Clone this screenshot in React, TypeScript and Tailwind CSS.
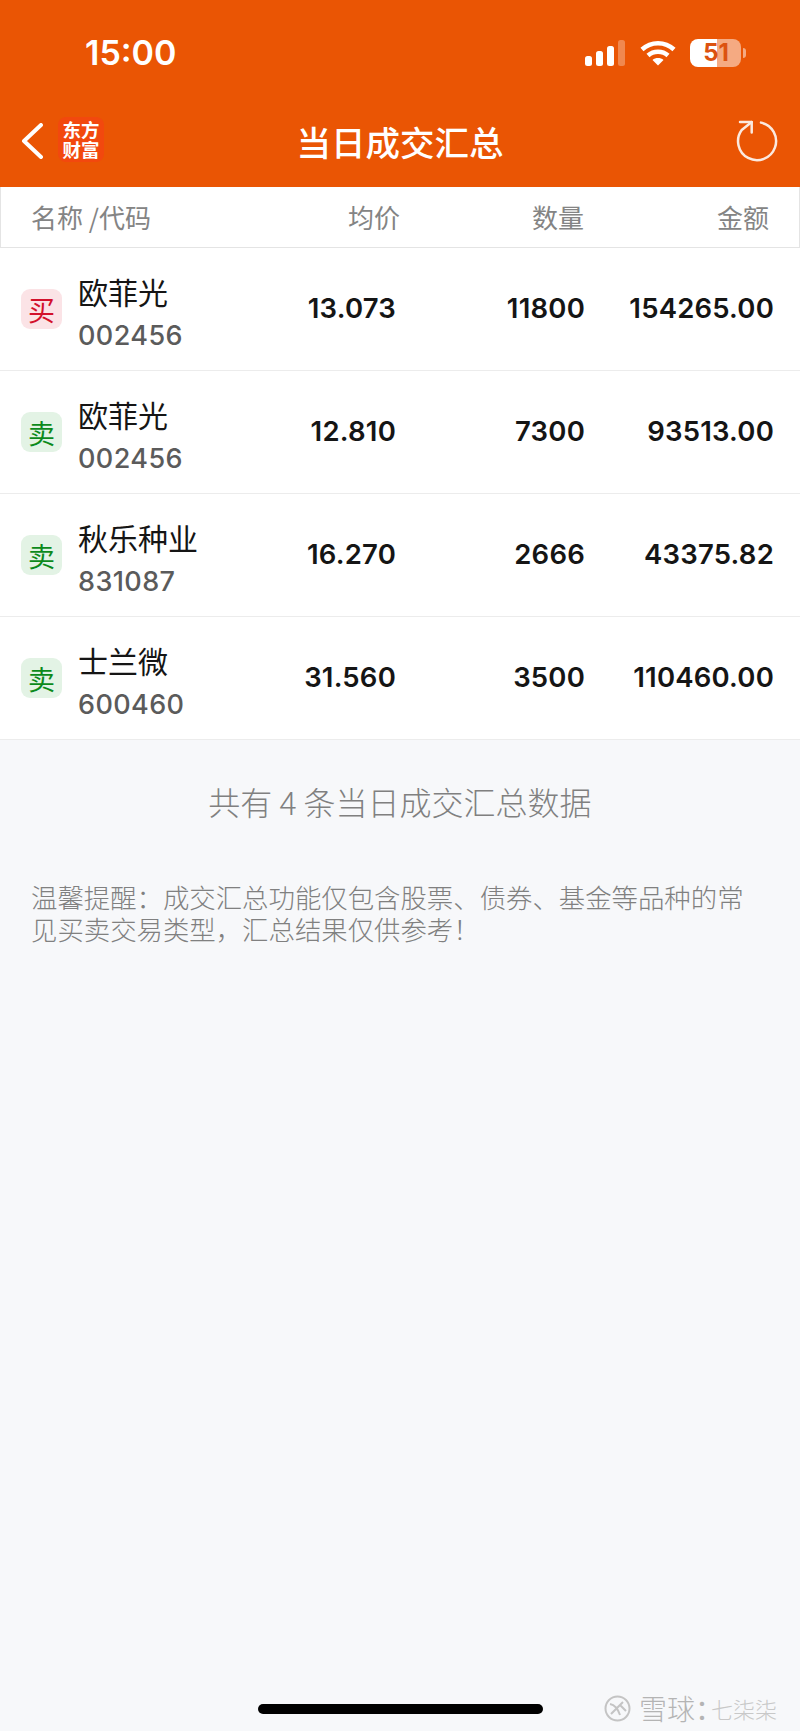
const cjk = "font-['Noto_Sans_CJK_SC','Noto_Sans',sans-serif]";

const rows = [
  { side: "买", name: "欧菲光", code: "002456", price: "13.073", qty: "11800", amount: "154265.00" },
  { side: "卖", name: "欧菲光", code: "002456", price: "12.810", qty: "7300", amount: "93513.00" },
  { side: "卖", name: "秋乐种业", code: "831087", price: "16.270", qty: "2666", amount: "43375.82" },
  { side: "卖", name: "士兰微", code: "600460", price: "31.560", qty: "3500", amount: "110460.00" },
];

const StatusIcons = () => (
  <div className="flex items-center gap-[14px]">
    <svg width="41" height="27" viewBox="0 0 41 27" fill="#fff">
      <rect x="0" y="16" width="7" height="10" rx="2.5" />
      <rect x="11" y="11" width="7" height="15" rx="2.5" />
      <rect x="22" y="6" width="7" height="20" rx="2.5" />
      <rect x="33" y="0" width="7" height="26" rx="2.5" fillOpacity="0.3" />
    </svg>
    <svg width="36" height="27" viewBox="0 0 36 27" fill="none" stroke="#fff" strokeWidth="4.5">
      <path d="M2 9.5C11 1 25 1 34 9.5" />
      <path d="M8 15.5C13.5 10.5 22.5 10.5 28 15.5" />
      <path d="M18 25.5l-5.5-5.5c3-2.600 8-2.600 11 0z" fill="#fff" stroke="none" />
    </svg>
    <div className="relative flex h-[28px] w-[56px] items-center">
      <div className="flex h-[28px] w-[52px] overflow-hidden rounded-[8px]">
        <div className="w-[27px] bg-white"></div>
        <div className="w-[25px] bg-white/50"></div>
      </div>
      <div className="ml-[2px] h-[10px] w-[3px] rounded-r-full bg-white/50"></div>
      <span className="absolute left-0 top-0 flex h-[28px] w-[52px] items-center justify-center font-['Inter'] text-[24px] font-bold leading-none text-[#dc5210]">
        51
      </span>
    </div>
  </div>
);

const Logo = () => (
  <div className={`flex h-[45px] w-[46px] flex-col items-center justify-center rounded-[8px] bg-[#f2480e] text-[18.500px] font-bold leading-[20px] text-white ${cjk}`}>
    <span>东方</span>
    <span>财富</span>
  </div>
);

const Row = ({ row }: { row: (typeof rows)[number] }) => {
  const buy = row.side === "买";
  return (
    <div className="flex h-[123px] items-center border-b border-[#ececec] bg-white pl-[21px]">
      <div
        className={`flex h-[40px] w-[41px] items-center justify-center rounded-[9px] text-[27px] leading-none ${cjk} ${
          buy ? "bg-[#fbe3e6] text-[#d3112c]" : "bg-[#e3f3e5] text-[#0c8a1b]"
        }`}
      >
        {row.side}
      </div>
      <div className="ml-[16px] w-[201px] pt-[6px]">
        <div className={`text-[30px] leading-[40px] text-[#151515] ${cjk}`}>{row.name}</div>
        <div className="mt-[7px] font-['Inter'] text-[27px] font-medium leading-[36px] tracking-[0.4px] text-[#5b5b5b]">{row.code}</div>
      </div>
      <div className="w-[117px] pb-[1px] text-right font-['Inter'] text-[27.500px] font-semibold tracking-[0.2px] text-[#151515]">{row.price}</div>
      <div className="w-[189px] pb-[1px] text-right font-['Inter'] text-[27.500px] font-semibold tracking-[0.2px] text-[#151515]">{row.qty}</div>
      <div className="w-[189px] pb-[1px] text-right font-['Inter'] text-[27.500px] font-semibold tracking-[0.2px] text-[#151515]">{row.amount}</div>
    </div>
  );
};

export default function App() {
  return (
    <div className="relative flex h-[1731px] w-[800px] flex-col overflow-hidden bg-[#f7f8fa]">
      <header className="h-[187px] shrink-0 bg-[#ea5504] text-white">
        <div className="flex h-[106px] items-center justify-between pl-[85px] pr-[54px]">
          <span className="font-['Inter'] text-[34px] font-semibold leading-none">15:00</span>
          <StatusIcons />
        </div>
        <div className="flex h-[81px] items-center pb-[11px] pl-[21px] pr-[22px]">
          <svg width="22" height="36" viewBox="0 0 22 36" fill="none" stroke="#fff" strokeWidth="4" strokeLinecap="round" strokeLinejoin="round">
            <path d="M20 2L3 18l17 16" />
          </svg>
          <div className="mb-[4px] ml-[15px]">
            <Logo />
          </div>
          <h1 className={`flex-1 pr-[40px] text-center text-[34.500px] font-medium leading-none ${cjk}`}>当日成交汇总</h1>
          <svg width="42" height="42" viewBox="0 0 42 42" fill="none" stroke="#fbe9df" strokeWidth="2.5" strokeLinecap="round" strokeLinejoin="round">
            <path d="M25 2.600A19 19 0 1 1 5.700 10L15.700 2" />
            <path d="M4 2H15.700V12.600" />
          </svg>
        </div>
      </header>

      <div className={`flex h-[61px] items-center border border-t-0 border-[#e4e4e4] bg-white pl-[30px] text-[26px] leading-none text-[#848484] ${cjk}`}>
        <div className="w-[235px]">名称 /代码</div>
        <div className="w-[134px] text-right">均价</div>
        <div className="w-[184px] text-right">数量</div>
        <div className="w-[185px] text-right">金额</div>
      </div>

      {rows.map((row, i) => (
        <Row key={i} row={row} />
      ))}

      <p className={`mt-[41px] text-center text-[32px] font-light leading-[40px] text-[#808080] ${cjk}`}>共有 4 条当日成交汇总数据</p>
      <p className={`mt-[60px] w-[750px] pl-[31px] text-[26.400px] font-light leading-[32px] text-[#808080] ${cjk}`}>
        温馨提醒：成交汇总功能仅包含股票、债券、基金等品种的常见买卖交易类型，汇总结果仅供参考！
      </p>

      <div className="absolute bottom-[17px] left-[258px] h-[10px] w-[285px] rounded-full bg-black"></div>

      <div className={`absolute bottom-[9px] right-[23px] flex items-center text-[28px] leading-none text-[#b4b4b4] ${cjk}`}>
        <svg className="mr-[8px]" width="27" height="27" viewBox="0 0 27 27" fill="none" stroke="#c4c4c4" strokeWidth="2">
          <circle cx="13.500" cy="13.500" r="12" />
          <path d="M6 9c5 1 8 5 10 11M7 19l7-7 5-5M16 10l6 6" />
        </svg>
        <span className="font-light">雪球</span>
        <span className="tracking-[-12px]">：</span>
        <span className="text-[22px] font-light text-[#c8c8c8]">七柒柒</span>
      </div>
    </div>
  );
}
